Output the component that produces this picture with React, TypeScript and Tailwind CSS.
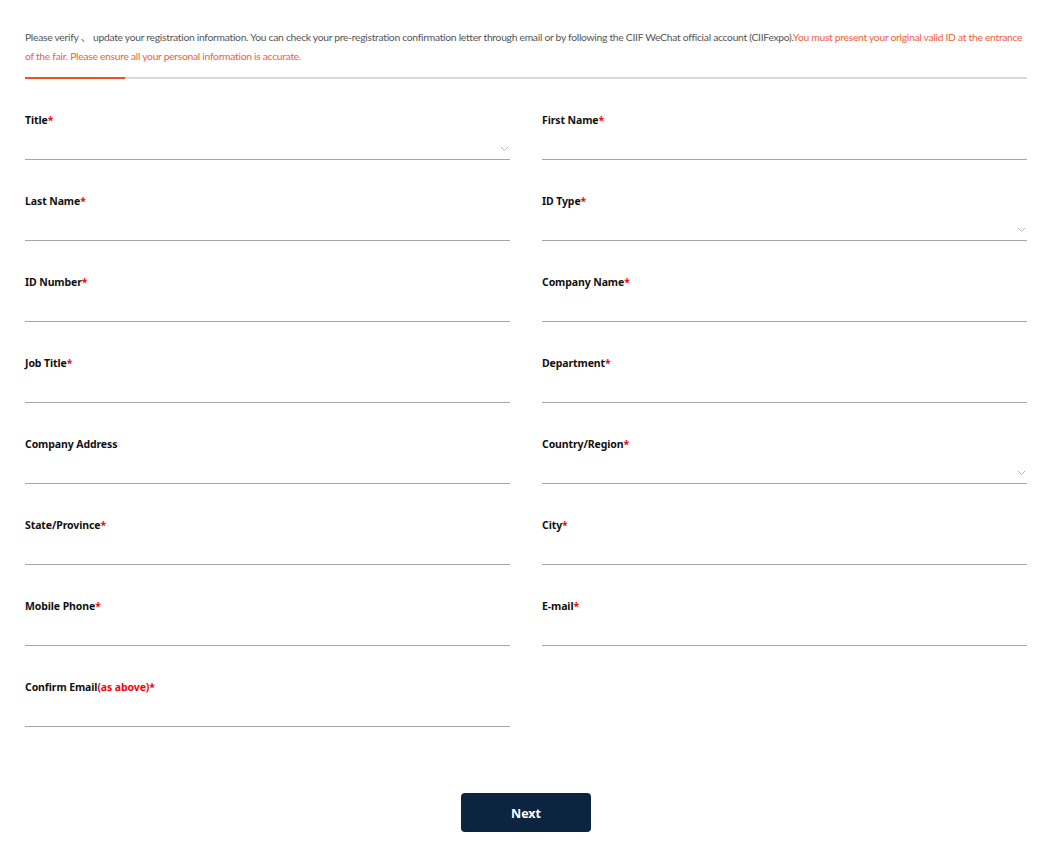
import React from "react";

type Field = { label: string; required?: boolean; select?: boolean; note?: string };

const fields: Field[] = [
  { label: "Title", required: true, select: true },
  { label: "First Name", required: true },
  { label: "Last Name", required: true },
  { label: "ID Type", required: true, select: true },
  { label: "ID Number", required: true },
  { label: "Company Name", required: true },
  { label: "Job Title", required: true },
  { label: "Department", required: true },
  { label: "Company Address" },
  { label: "Country/Region", required: true, select: true },
  { label: "State/Province", required: true },
  { label: "City", required: true },
  { label: "Mobile Phone", required: true },
  { label: "E-mail", required: true },
  { label: "Confirm Email", required: true, note: "(as above)" },
];

function Chevron() {
  return (
    <svg width="9" height="6" viewBox="0 0 9 6" className="absolute right-[1px] bottom-[7px]">
      <path d="M1 1 L4.5 4.5 L8 1" fill="none" stroke="#b5b5b5" strokeWidth="1" />
    </svg>
  );
}

function FormField({ f }: { f: Field }) {
  return (
    <div className="flex flex-col">
      <label className="text-[10.5px] leading-[16px] font-bold text-[#111] tracking-[-0.1px]">
        {f.label}
        {f.note && <span className="text-[#f00]">{f.note}</span>}
        {f.required && <span className="text-[#f00]">*</span>}
      </label>
      <div className="relative h-[32px] border-b border-[#a6a6a6]">
        <input className="w-full h-full outline-none bg-transparent text-[12px]" />
        {f.select && <Chevron />}
      </div>
    </div>
  );
}

export default function App() {
  return (
    <div
      className="w-[1047px] min-h-[861px] bg-white pl-[25px] pr-[20px] pt-[28px]"
      style={{ fontFamily: '"Noto Sans", "Noto Sans CJK SC", sans-serif' }}
    >
      <p
        className="text-[10.3px] leading-[19px] text-[#555] tracking-[-0.28px]"
        style={{ fontFamily: 'Lato, "Noto Sans CJK SC", sans-serif' }}
      >
        Please verify 、 update your registration information. You can check your pre-registration confirmation letter through email or by following the CIIF WeChat official account (CIIFexpo).
        <span className="text-[#f2603c]">
          You must present your original valid ID at the entrance of the fair. Please ensure all your personal information is accurate.
        </span>
      </p>
      <div className="mt-[11px] flex h-[2px] bg-[#d9d9d9]">
        <div className="w-[100px] bg-[#f04e23]" />
      </div>
      <div className="mt-[33px] grid grid-cols-2 gap-x-[32px] gap-y-[33px]">
        {fields.map((f) => (
          <FormField key={f.label} f={f} />
        ))}
      </div>
      <div className="mt-[66px] flex justify-center">
        <button className="w-[130px] h-[39px] pt-[3px] rounded-[4px] bg-[#0c2440] text-white text-[12.5px] font-bold">
          Next
        </button>
      </div>
    </div>
  );
}
